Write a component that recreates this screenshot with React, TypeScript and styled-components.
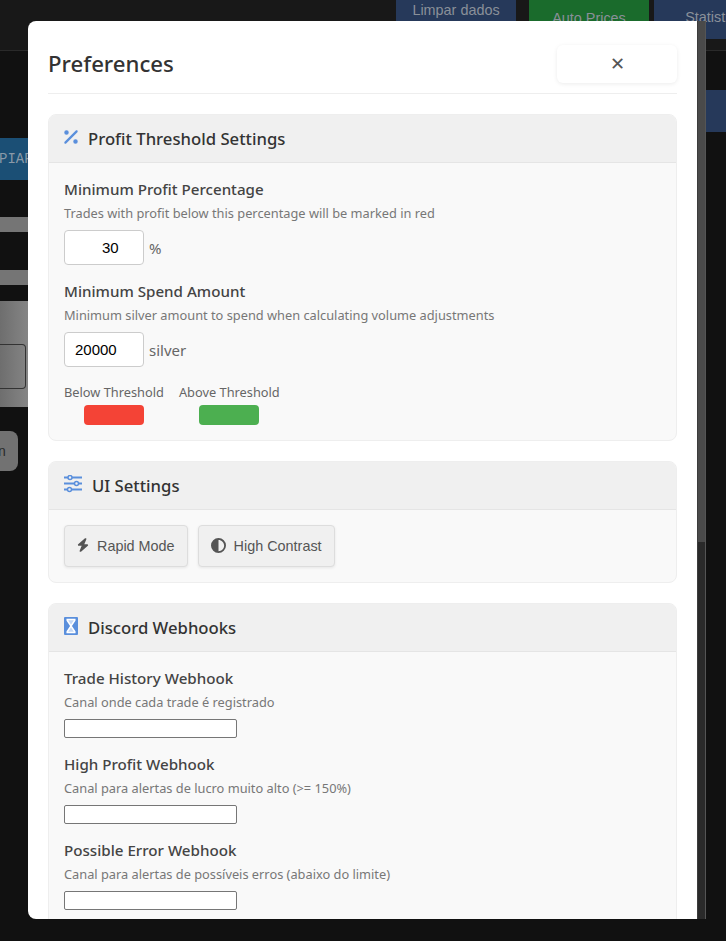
import styled, { createGlobalStyle } from "styled-components";
import { FaBolt, FaCircleHalfStroke, FaPercent } from "react-icons/fa6";

const Global = createGlobalStyle`
    html, body {
        margin: 0;
        padding: 0;
        height: 941px;
        overflow: hidden;
        background: #111111;
    }
    * { box-sizing: border-box; }
`

const Page = styled.div`
    position: relative;
    width: 726px;
    height: 941px;
    overflow: hidden;
    background: #111111;
    font-family: "Liberation Sans", Arial, sans-serif;
`

const TopBar = styled.div`
    height: 51px;
    background: #181818;
    border-bottom: 1px solid #2a2a2a;
    display: flex;
    align-items: flex-start;
    padding-left: 396px;
`

const TopButton = styled.div<{ $bg: string; $w: number; $ml: number; $pt: number; $h: number }>`
    flex: none;
    width: ${p => p.$w}px;
    height: ${p => p.$h}px;
    margin-left: ${p => p.$ml}px;
    padding-top: ${p => p.$pt}px;
    background: ${p => p.$bg};
    color: #8a9099;
    font-size: 14.4px;
    line-height: 16px;
    text-align: center;
    white-space: nowrap;
`

const Behind = styled.div`
    display: flex;
    justify-content: space-between;
    align-items: flex-start;
`

const LeftColumn = styled.div`
    width: 28px;
    display: flex;
    flex-direction: column;
`

const Banner = styled.div`
    height: 42px;
    margin-top: 87px;
    background: #1b4f75;
    color: #8a9aa8;
    font-family: "Liberation Mono", monospace;
    font-size: 14px;
    line-height: 42px;
    text-indent: -1px;
    white-space: nowrap;
    overflow: hidden;
`

const GreyStrip = styled.div<{ $mt: number }>`
    height: 15px;
    margin-top: ${p => p.$mt}px;
    background: #757575;
`

const GreyBlock = styled.div`
    height: 106px;
    margin-top: 16px;
    padding-top: 43px;
    background: linear-gradient(90deg, #6e6e6e, #858585);
`

const GreyInner = styled.div`
    width: 26px;
    height: 45px;
    border: 1px solid #333333;
    border-left: none;
    border-radius: 0 4px 4px 0;
`

const GreyButton = styled.div`
    width: 18px;
    height: 40px;
    margin-top: 24px;
    background: #727272;
    border-radius: 0 8px 8px 0;
    color: #2a2a2a;
    font-size: 14px;
    line-height: 40px;
    text-indent: -2px;
    overflow: hidden;
`

const RightBlock = styled.div`
    width: 20px;
    height: 42px;
    margin-top: 39px;
    background: #26395a;
`

const Overlay = styled.div`
    position: absolute;
    left: 28px;
    top: 21px;
    height: 898px;
    display: flex;
`

const Modal = styled.div`
    width: 669px;
    height: 898px;
    background: #ffffff;
    border-radius: 8px 0 0 8px;
    padding: 20px;
    overflow: hidden;
    color: #333333;
    font-family: "Noto Sans", "Open Sans", sans-serif;
`

const Scrollbar = styled.div`
    width: 9px;
    height: 898px;
    background: #2a2a2a;
    border-left: 1px solid #3c3c3c;
    border-right: 1px solid #555555;
`

const Thumb = styled.div`
    height: 521px;
    background: #4a4a4a;
`

const Header = styled.div`
    display: flex;
    justify-content: space-between;
    align-items: flex-start;
    height: 53px;
    border-bottom: 1px solid #eeeeee;
    margin-bottom: 20px;
`

const Title = styled.h2`
    margin: 7px 0 0;
    font-size: 22.2px;
    line-height: 32px;
    font-weight: 500;
    color: #333333;
`

const CloseButton = styled.button`
    width: 120px;
    height: 38px;
    margin-top: 4px;
    border: none;
    background: #ffffff;
    border-radius: 6px;
    box-shadow: 0 1px 4px rgba(0, 0, 0, 0.08);
    color: #555555;
    font-size: 18px;
    font-family: "Liberation Sans", Arial, sans-serif;
    display: flex;
    align-items: center;
    justify-content: center;
    padding: 0;
`

const Section = styled.section`
    background: #f9f9f9;
    border: 1px solid #eeeeee;
    border-radius: 8px;
    margin-bottom: 20px;
    overflow: hidden;
`

const SectionHeader = styled.div`
    height: 48px;
    background: #f0f0f0;
    border-bottom: 1px solid #e5e5e5;
    display: flex;
    align-items: center;
    gap: 10px;
    padding-left: 15px;
    font-size: 16.7px;
    font-weight: 500;
    color: #333333;
    svg { color: #5a8fdc; margin-top: -4px; flex: none; }
`

const PercentIcon = styled(FaPercent)`
    width: 14px;
    height: 18px;
`

const SectionBody = styled.div`
    padding: 15px;
`

const Field = styled.div`
    margin-bottom: 15px;
`

const Label = styled.div`
    font-size: 15.15px;
    line-height: 22px;
    font-weight: 500;
    color: #444444;
`

const Hint = styled.div`
    font-size: 12.8px;
    line-height: 18px;
    color: #777777;
    margin: 4px 0 8px;
`

const InputRow = styled.div`
    display: flex;
    align-items: center;
    gap: 5px;
    font-size: 15px;
    color: #666666;
`

const NumberInput = styled.input<{ $pl: number }>`
    width: 80px;
    height: 35px;
    border: 1px solid #cccccc;
    border-radius: 4px;
    background: #ffffff;
    padding: 0 10px 0 ${p => p.$pl}px;
    font-family: "Liberation Sans", Arial, sans-serif;
    font-size: 15px;
    color: #000000;
`

const Legend = styled.div`
    display: flex;
    gap: 15px;
    margin-top: 16px;
    font-size: 12.8px;
    color: #666666;
`

const LegendItem = styled.div`
    display: flex;
    flex-direction: column;
    align-items: center;
    gap: 4px;
    line-height: 18px;
`

const Swatch = styled.div<{ $color: string }>`
    width: 60px;
    height: 20px;
    border-radius: 4px;
    background: ${p => p.$color};
`

const Buttons = styled.div`
    display: flex;
    gap: 10px;
`

const ToggleButton = styled.button`
    height: 42px;
    padding: 0 12px;
    display: flex;
    align-items: center;
    gap: 8px;
    background: #f0f0f0;
    border: 1px solid #dddddd;
    border-radius: 4px;
    box-shadow: 0 1px 3px rgba(0, 0, 0, 0.08);
    color: #555555;
    font-family: "Liberation Sans", Arial, sans-serif;
    font-size: 14.4px;
    svg { flex: none; margin-top: -2px; }
`

const BoltIcon = styled(FaBolt)`
    width: 12px;
    height: 14px;
`

const TextInput = styled.input`
    display: block;
    width: 173px;
    height: 19px;
    border: 1px solid #767676;
    border-radius: 2px;
    background: #ffffff;
    padding: 0;
`

function SlidersIcon() {
    return (
        <svg width="18" height="18" viewBox="0 0 18 18" fill="none" stroke="currentColor" strokeWidth="2">
            <path d="M0 2.5h18M0 8.5h18M0 14.5h18" />
            <circle cx="6" cy="2.5" r="2" fill="#f0f0f0" strokeWidth="1.5" />
            <circle cx="12.5" cy="8.5" r="2" fill="#f0f0f0" strokeWidth="1.5" />
            <circle cx="5.5" cy="14.5" r="2" fill="#f0f0f0" strokeWidth="1.5" />
        </svg>
    );
}

function DiscordIcon() {
    return (
        <svg width="14" height="18" viewBox="0 0 14 18">
            <rect width="14" height="18" rx="1" fill="#5a8fdc" />
            <path d="M2.5 2.5h9L7 9l4.5 6.5h-9L7 9z" fill="#c4d8f5" />
            <path d="M2.5 2.5h9M2.5 15.5h9M3 3l8 12M11 3l-8 12" stroke="#ffffff" strokeWidth="1.5" fill="none" />
        </svg>
    );
}

const webhooks = [
    { label: "Trade History Webhook", hint: "Canal onde cada trade é registrado" },
    { label: "High Profit Webhook", hint: "Canal para alertas de lucro muito alto (>= 150%)" },
    { label: "Possible Error Webhook", hint: "Canal para alertas de possíveis erros (abaixo do limite)" },
];

export default function App() {
    return (
        <Page>
            <Global />
            <TopBar>
                <TopButton $bg="#26395a" $w={120} $ml={0} $pt={2} $h={30}>Limpar dados</TopButton>
                <TopButton $bg="#1a6b2c" $w={120} $ml={13} $pt={10} $h={30}>Auto Prices</TopButton>
                <TopButton $bg="#26395a" $w={120} $ml={5} $pt={9} $h={39}>Statistics</TopButton>
            </TopBar>
            <Behind>
                <LeftColumn>
                    <Banner>PIAR</Banner>
                    <GreyStrip $mt={37} />
                    <GreyStrip $mt={38} />
                    <GreyBlock><GreyInner /></GreyBlock>
                    <GreyButton>n</GreyButton>
                </LeftColumn>
                <RightBlock />
            </Behind>
            <Overlay>
                <Modal>
                    <Header>
                        <Title>Preferences</Title>
                        <CloseButton>✕</CloseButton>
                    </Header>
                    <Section>
                        <SectionHeader><PercentIcon />Profit Threshold Settings</SectionHeader>
                        <SectionBody>
                            <Field>
                                <Label>Minimum Profit Percentage</Label>
                                <Hint>Trades with profit below this percentage will be marked in red</Hint>
                                <InputRow><NumberInput $pl={37} defaultValue="30" /> %</InputRow>
                            </Field>
                            <Field>
                                <Label>Minimum Spend Amount</Label>
                                <Hint>Minimum silver amount to spend when calculating volume adjustments</Hint>
                                <InputRow><NumberInput $pl={10} defaultValue="20000" /> silver</InputRow>
                            </Field>
                            <Legend>
                                <LegendItem>Below Threshold<Swatch $color="#f44336" /></LegendItem>
                                <LegendItem>Above Threshold<Swatch $color="#4caf50" /></LegendItem>
                            </Legend>
                        </SectionBody>
                    </Section>
                    <Section>
                        <SectionHeader><SlidersIcon />UI Settings</SectionHeader>
                        <SectionBody>
                            <Buttons>
                                <ToggleButton><BoltIcon />Rapid Mode</ToggleButton>
                                <ToggleButton><FaCircleHalfStroke size={15} />High Contrast</ToggleButton>
                            </Buttons>
                        </SectionBody>
                    </Section>
                    <Section>
                        <SectionHeader><DiscordIcon />Discord Webhooks</SectionHeader>
                        <SectionBody>
                            {webhooks.map(w => (
                                <Field key={w.label}>
                                    <Label>{w.label}</Label>
                                    <Hint>{w.hint}</Hint>
                                    <TextInput />
                                </Field>
                            ))}
                        </SectionBody>
                    </Section>
                </Modal>
                <Scrollbar><Thumb /></Scrollbar>
            </Overlay>
        </Page>
    );
}
